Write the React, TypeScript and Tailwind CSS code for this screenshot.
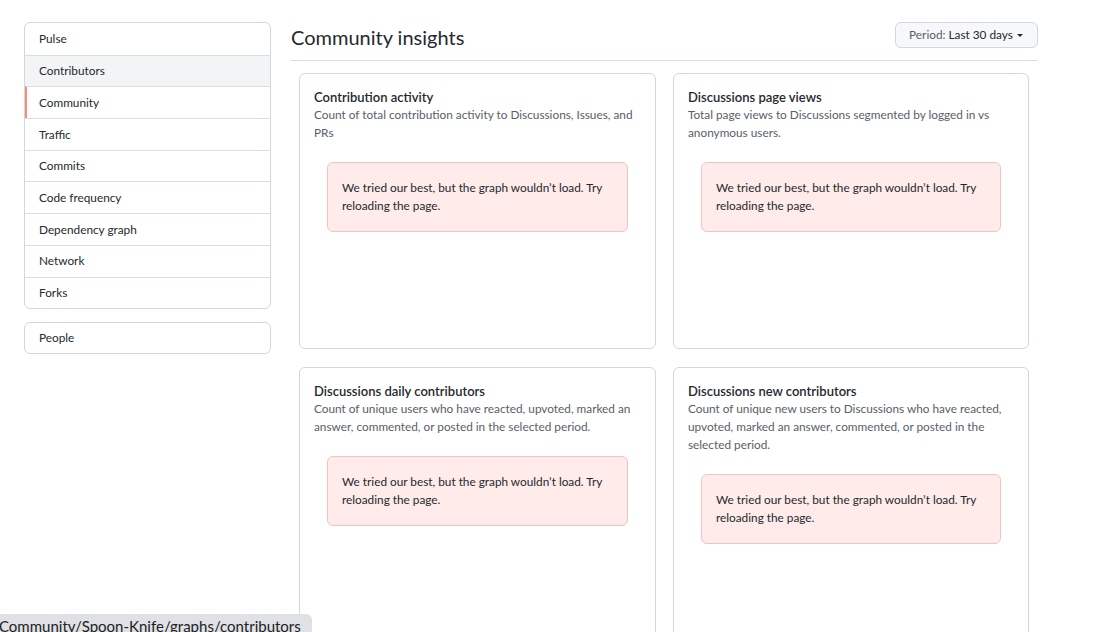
import React from "react";

const navItems = [
  "Pulse",
  "Contributors",
  "Community",
  "Traffic",
  "Commits",
  "Code frequency",
  "Dependency graph",
  "Network",
  "Forks",
];

const cards = [
  {
    title: "Contribution activity",
    desc: "Count of total contribution activity to Discussions, Issues, and PRs",
  },
  {
    title: "Discussions page views",
    desc: "Total page views to Discussions segmented by logged in vs anonymous users.",
  },
  {
    title: "Discussions daily contributors",
    desc: "Count of unique users who have reacted, upvoted, marked an answer, commented, or posted in the selected period.",
  },
  {
    title: "Discussions new contributors",
    desc: "Count of unique new users to Discussions who have reacted, upvoted, marked an answer, commented, or posted in the selected period.",
  },
];

function Card({ title, desc }: { title: string; desc: string }) {
  return (
    <div className="border border-[#d0d7de] rounded-[6px] h-[276px] px-[14px] pt-[14px] bg-white">
      <div className="text-[13px] font-semibold text-[#24292f] leading-[18px]">{title}</div>
      <div className="text-[11.8px] text-[#57606a] leading-[18px]">{desc}</div>
      <div className="mx-[13px] mt-[20px] border border-[#f5c2c4] bg-[#ffebe9] rounded-[6px] px-[14px] py-[16px] text-[11.8px] leading-[18px] text-[#24292f]">
        We tried our best, but the graph wouldn’t load. Try reloading the page.
      </div>
    </div>
  );
}

export default function App() {
  return (
    <div
      className="relative w-[1095px] h-[632px] overflow-hidden bg-white text-[#24292f]"
      style={{ fontFamily: "'Segoe UI', Lato, 'Noto Sans', sans-serif" }}
    >
      <div className="flex pt-[22px] pl-[24px]">
        <div className="w-[247px] shrink-0">
          <div className="border border-[#d0d7de] rounded-[6px] overflow-hidden">
            {navItems.map((item, i) => (
              <div
                key={item}
                className={
                  "h-[31.7px] flex items-center px-[14px] text-[11.8px] " +
                  (i > 0 ? "border-t border-[#d8dee4] " : "") +
                  (item === "Contributors" ? "bg-[#f3f4f6] " : "") +
                  (item === "Community" ? "border-l-2 border-l-[#fd8c73] pl-[12px] " : "")
                }
              >
                {item}
              </div>
            ))}
          </div>
          <div className="mt-[13px] border border-[#d0d7de] rounded-[6px] h-[32px] flex items-center px-[14px] text-[11.8px]">
            People
          </div>
        </div>
        <div className="ml-[20px] w-[747px]">
          <div className="flex items-start justify-between border-b border-[#d8dee4] h-[39px]">
            <h1 className="text-[20px] text-[#24292f] leading-[30px]">Community insights</h1>
            <button className="h-[26px] w-[143px] border border-[#d0d7de] bg-[#f6f8fa] rounded-[6px] text-[11.8px] flex items-center justify-center gap-[3px]">
              <span>
                <span className="text-[#57606a]">Period:</span> Last 30 days
              </span>
              <svg width="8" height="8" viewBox="0 0 8 8">
                <path d="M1 3 L7 3 L4 6 Z" fill="#24292f" />
              </svg>
            </button>
          </div>
          <div className="grid grid-cols-[357px_356px] gap-x-[17px] gap-y-[18px] mt-[12px] ml-[8px]">
            {cards.map((c) => (
              <Card key={c.title} title={c.title} desc={c.desc} />
            ))}
          </div>
        </div>
      </div>
      <div className="absolute left-0 bottom-0 h-[18px] w-[312px] bg-[#dfe1e5] rounded-tr-[6px] text-[15px] leading-[25px] text-[#202124] overflow-hidden whitespace-nowrap">
        <span className="-ml-[1px]">Community/Spoon-Knife/graphs/contributors</span>
      </div>
    </div>
  );
}
